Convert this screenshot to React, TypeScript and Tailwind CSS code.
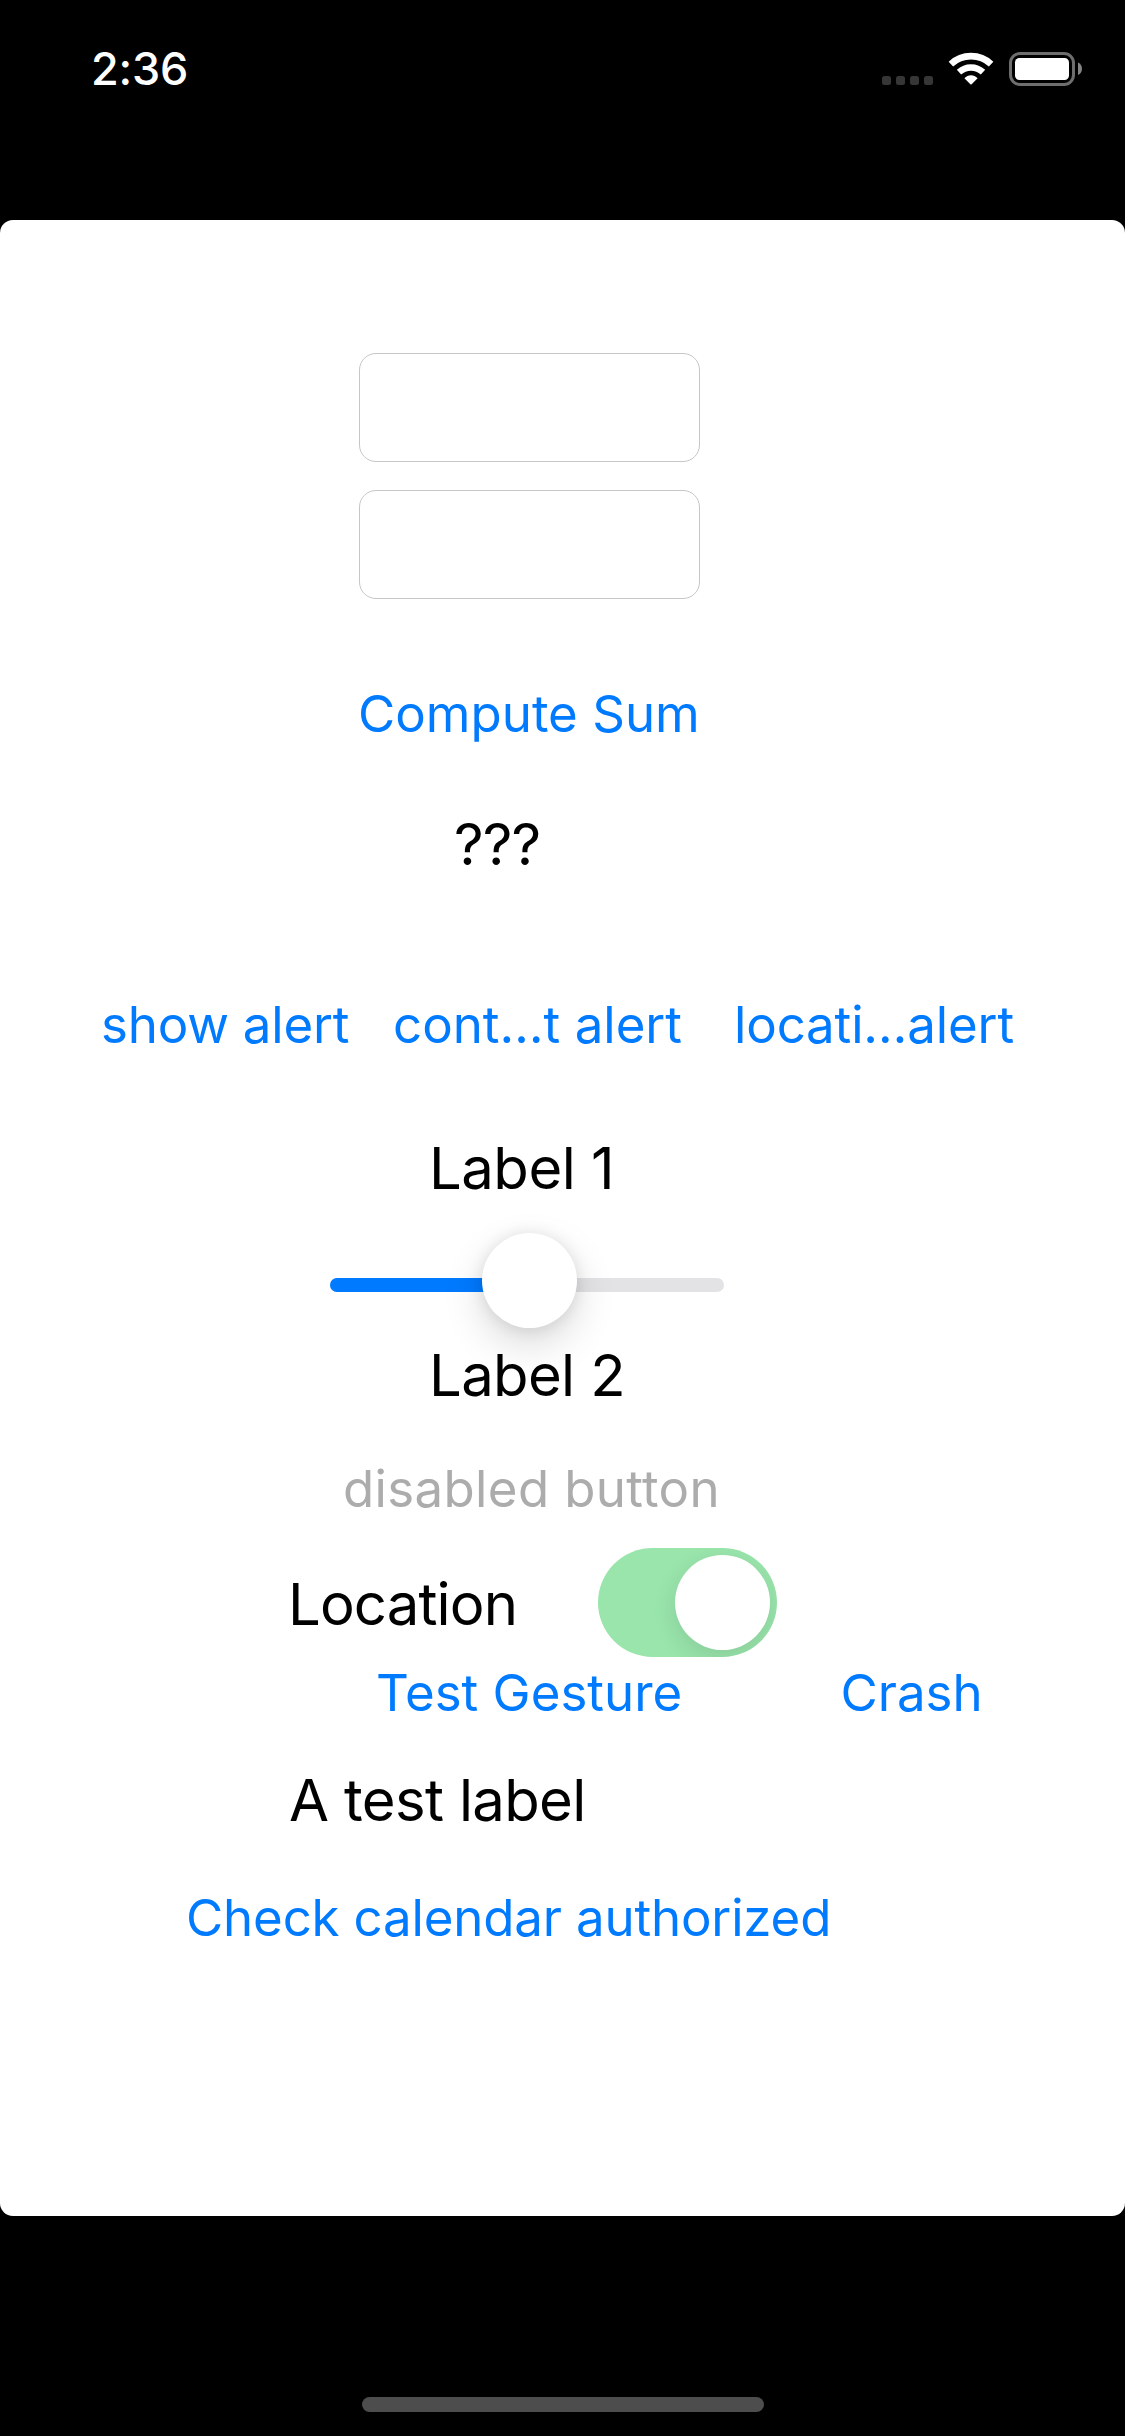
import type { ReactNode } from 'react';

type TextProps = { children: ReactNode; className?: string; disabled?: boolean };

function LinkButton({ children, className = '', disabled = false }: TextProps) {
  return (
    <button
      type="button"
      disabled={disabled}
      className={`h-20 whitespace-nowrap text-left text-[51px] leading-[80px] text-[#007aff] disabled:text-[#acacac] ${className}`}
    >
      {children}
    </button>
  );
}

function Label({ children, className = '' }: TextProps) {
  return <p className={`h-20 whitespace-nowrap text-[58px] leading-[80px] text-black ${className}`}>{children}</p>;
}

function TextField({ label }: { label: string }) {
  return (
    <input
      type="text"
      aria-label={label}
      className="ml-[359px] block h-[109px] w-[340.5px] rounded-[17px] border border-[#c6c6c6] bg-white px-5 text-[51px] outline-none"
    />
  );
}

function WifiIcon() {
  return (
    <svg width="46" height="33" viewBox="0 0 46 33" fill="none" aria-hidden="true">
      <path d="M2.9 12.1A29.4 29.4 0 0 1 43.1 12.1" stroke="#fff" strokeWidth="6.6" />
      <path d="M11 20.2A17.6 17.6 0 0 1 35 20.2" stroke="#fff" strokeWidth="6.4" />
      <path d="M16.4 26.2C20 22.2 26 22.2 29.6 26.2L23.6 32.2Q23 32.8 22.4 32.2Z" fill="#fff" />
    </svg>
  );
}

function BatteryIcon() {
  return (
    <svg width="73" height="34" viewBox="0 0 73 34" fill="none" aria-hidden="true">
      <rect x="1.5" y="1.5" width="63" height="31" rx="9.5" stroke="#6e6e6e" strokeWidth="3" />
      <rect x="6" y="6" width="54" height="22" rx="4.5" fill="#fff" />
      <path d="M69 10.5C74.3 12.6 74.3 20.9 69 23Z" fill="#858585" />
    </svg>
  );
}

function StatusBar() {
  return (
    <header className="flex h-[220px] items-start justify-between pl-[91px] pr-[43px]">
      <time className="mt-[39px] text-[45px] font-[550] leading-[60px] tracking-[-0.2px] text-white">2:36</time>
      <div className="mt-[52px] flex items-start">
        <div className="mr-[15px] mt-6 flex gap-[5px]">
          <i className="size-[9px] rounded-[2.5px] bg-[#363636]" />
          <i className="size-[9px] rounded-[2.5px] bg-[#363636]" />
          <i className="size-[9px] rounded-[2.5px] bg-[#363636]" />
          <i className="size-[9px] rounded-[2.5px] bg-[#363636]" />
        </div>
        <WifiIcon />
        <div className="ml-[15px]">
          <BatteryIcon />
        </div>
      </div>
    </header>
  );
}

function Slider() {
  return (
    <div className="relative ml-[330px] mt-6 h-24 w-[394px] pt-[46px]">
      <div className="flex h-3.5 w-full overflow-hidden rounded-full bg-[#e3e3e5]">
        <div className="w-[195px] bg-[#007aff]" />
      </div>
      <div className="absolute left-[151.5px] top-[0.5px] size-[95.5px] rounded-full bg-white shadow-[0_16px_40px_rgba(0,0,0,0.15),0_1px_16px_rgba(0,0,0,0.1)]" />
    </div>
  );
}

function Toggle() {
  return (
    <div role="switch" aria-checked="true" className="ml-auto flex h-[109px] w-[179px] justify-end overflow-hidden rounded-full bg-[#99e5ac] p-[7px]">
      <div className="size-[95px] rounded-full bg-white shadow-[0_8px_24px_rgba(0,0,0,0.11)]" />
    </div>
  );
}

export default function App() {
  return (
    <div className="flex h-[2436px] w-[1125px] flex-col bg-black font-['Inter',sans-serif]">
      <StatusBar />
      <main className="flex h-[1996px] flex-col items-start overflow-hidden rounded-[13px] bg-white pt-[133px]">
        <div className="flex flex-col gap-7">
          <TextField label="First number" />
          <TextField label="Second number" />
        </div>
        <LinkButton className="ml-[358px] mt-[75px]">Compute Sum</LinkButton>
        <Label className="ml-[454px] mt-[50px] tracking-[-0.9px]">???</Label>
        <div className="mt-[101px] flex pl-[101px]">
          <LinkButton className="w-[292px] tracking-[-0.2px]">show alert</LinkButton>
          <LinkButton className="w-[341px]">cont…t alert</LinkButton>
          <LinkButton className="tracking-[-0.15px]">locati…alert</LinkButton>
        </div>
        <Label className="ml-[429px] mt-[63px] tracking-[-0.5px]">Label 1</Label>
        <Slider />
        <Label className="relative ml-[429px] mt-[7px] tracking-[-0.65px]">Label 2</Label>
        <LinkButton disabled className="ml-[343px] mt-[34px] tracking-[0.35px]">disabled button</LinkButton>
        <div className="ml-[288px] mt-[19px] flex w-[489px] items-center">
          <Label className="mt-[3px] tracking-[-0.85px]">Location</Label>
          <Toggle />
        </div>
        <div className="-mt-1 flex pl-[376px]">
          <LinkButton className="w-[464.5px]">Test Gesture</LinkButton>
          <LinkButton>Crash</LinkButton>
        </div>
        <Label className="ml-[289px] mt-[27px] tracking-[-0.65px]">A test label</Label>
        <LinkButton className="ml-[186px] mt-[38px] tracking-[-0.17px]">Check calendar authorized</LinkButton>
      </main>
      <footer className="flex flex-1 justify-center pt-[181px]">
        <div className="h-[15px] w-[402px] rounded-full bg-[#4d4d4d]" />
      </footer>
    </div>
  );
}
